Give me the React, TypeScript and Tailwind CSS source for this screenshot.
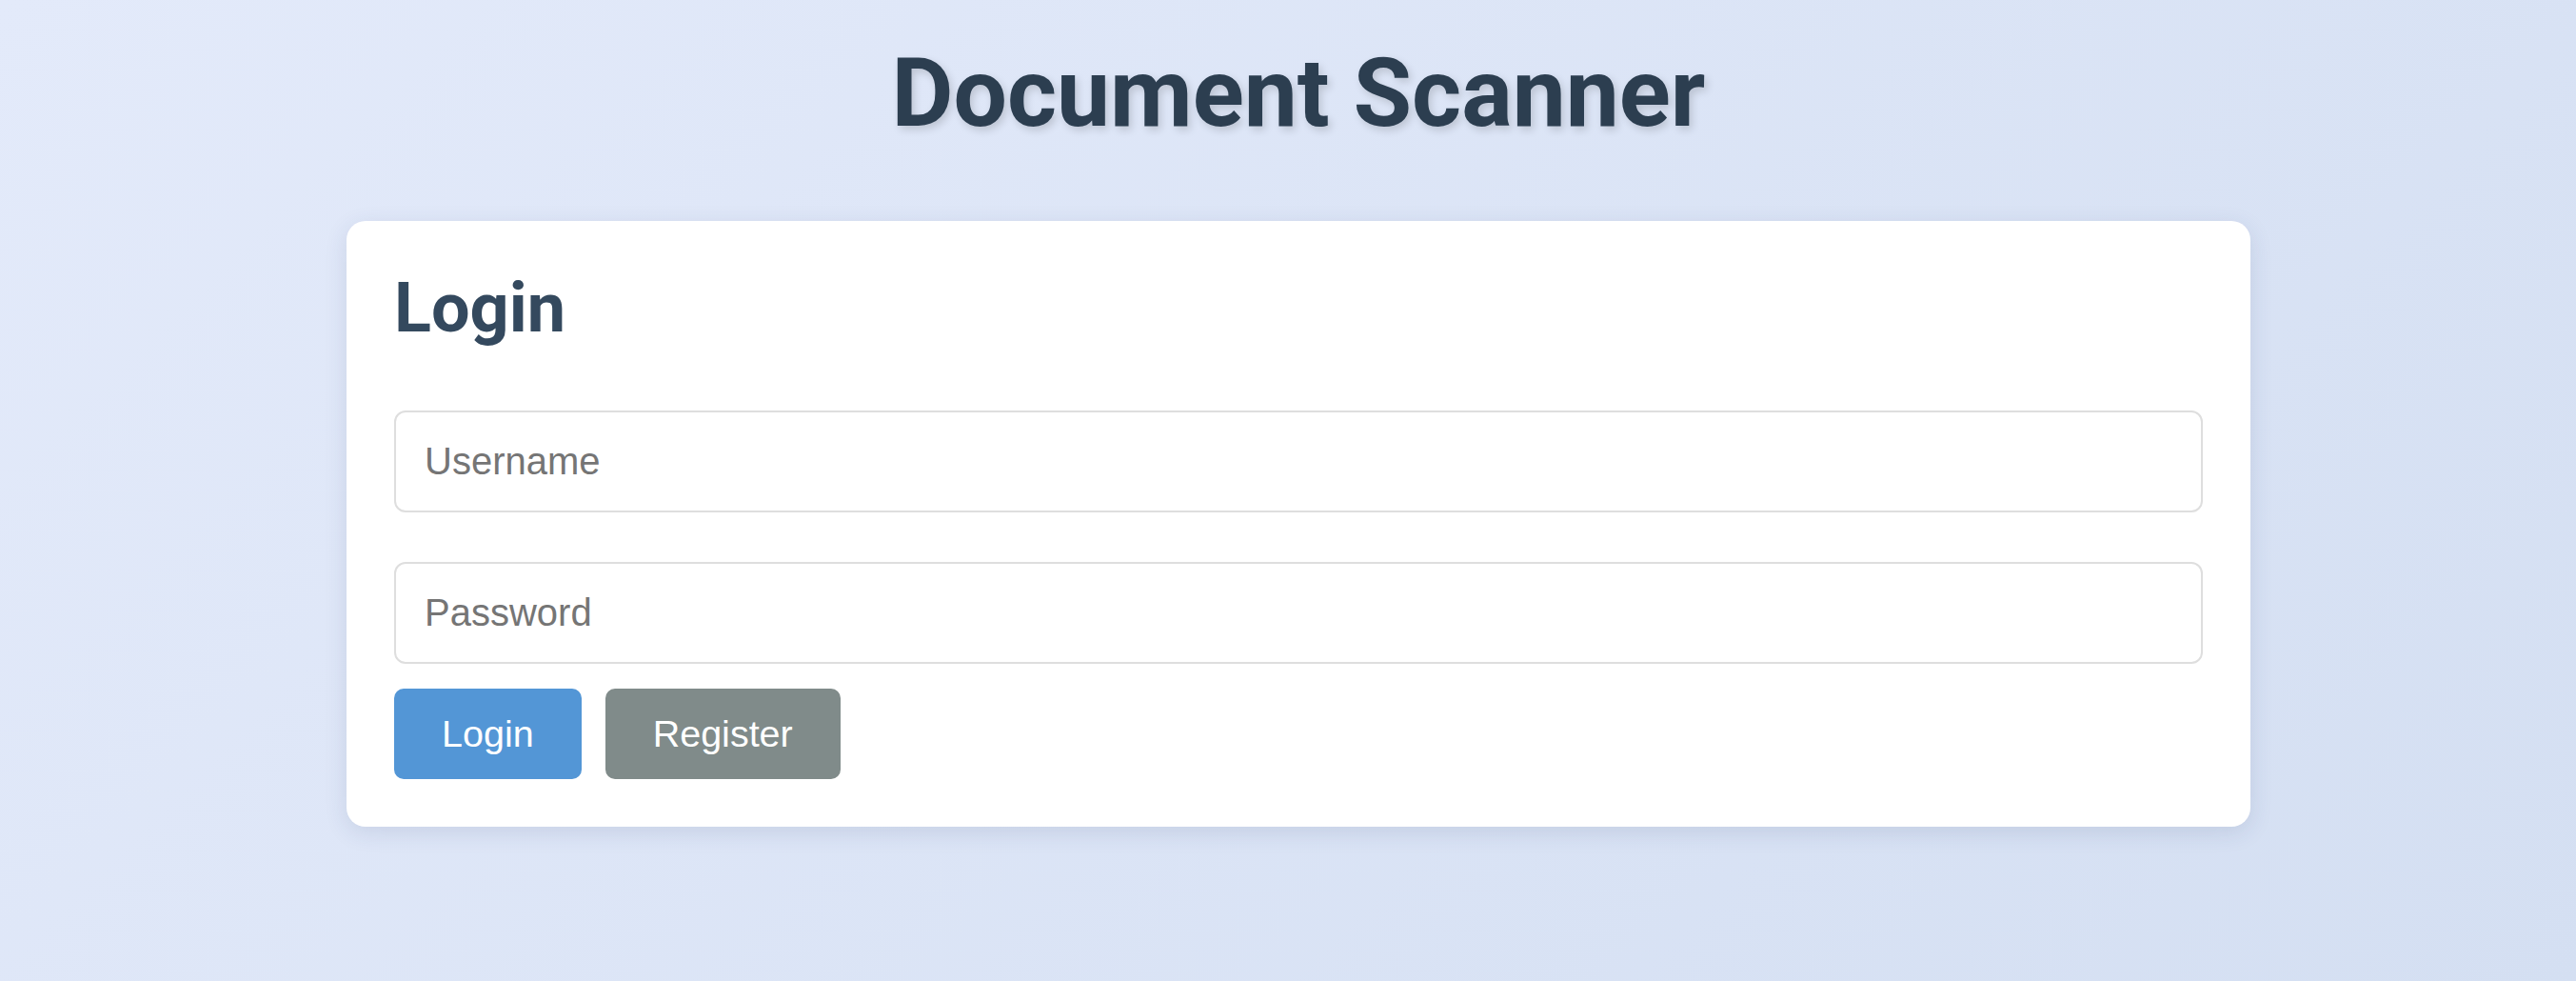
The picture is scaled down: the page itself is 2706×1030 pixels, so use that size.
import React from "react";

export default function App() {
  return (
    <div className="min-h-[1030px] w-full bg-[linear-gradient(135deg,#e3eafa_0%,#d4dff2_100%)] pl-[22px] font-['Roboto',sans-serif]">
      <div className="flex flex-col items-center pt-[39px]">
        <h1 className="text-[100px] leading-[117px] font-bold text-[#2c3e50] [text-shadow:3px_4px_8px_rgba(0,0,0,0.15)]">
          Document Scanner
        </h1>
        <div className="mt-[76px] w-[2000px] rounded-[20px] bg-white p-[50px] shadow-[0_6px_24px_rgba(40,60,110,0.12)]">
          <h2 className="text-[72px] leading-[84px] font-bold text-[#34495e]">Login</h2>
          <div className="mt-[65px] flex flex-col gap-[52px]">
            <input
              type="text"
              placeholder="Username"
              className="h-[107px] w-full rounded-[12px] border-[2.5px] border-[#dedede] bg-white px-[30px] font-['Liberation_Sans',Arial,sans-serif] text-[40px] text-[#333] outline-none placeholder:text-[#757575]"
            />
            <input
              type="password"
              placeholder="Password"
              className="h-[107px] w-full rounded-[12px] border-[2.5px] border-[#dedede] bg-white px-[30px] font-['Liberation_Sans',Arial,sans-serif] text-[40px] text-[#333] outline-none placeholder:text-[#757575]"
            />
          </div>
          <div className="mt-[26px] flex gap-[25px]">
            <button className="flex h-[95px] items-center justify-center rounded-[10px] bg-[#5396d6] px-[50px] font-['Liberation_Sans',Arial,sans-serif] text-[39.5px] text-white">
              Login
            </button>
            <button className="flex h-[95px] items-center justify-center rounded-[10px] bg-[#808b8a] px-[50px] font-['Liberation_Sans',Arial,sans-serif] text-[39.5px] text-white">
              Register
            </button>
          </div>
        </div>
      </div>
    </div>
  );
}
